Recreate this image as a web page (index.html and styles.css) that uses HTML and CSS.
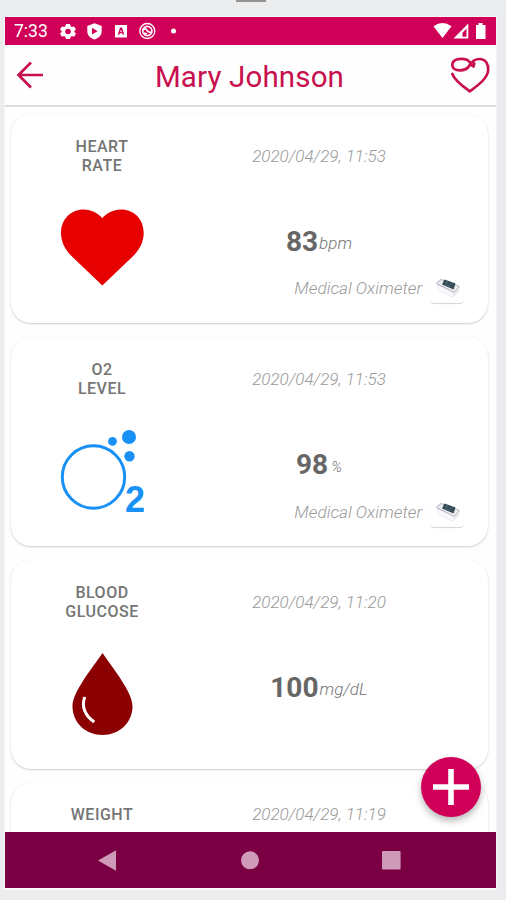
FILE: index.html
```html
<!DOCTYPE html>
<html lang="en">
<head>
<meta charset="utf-8">
<title>Mary Johnson</title>
<link rel="stylesheet" href="styles.css">
</head>
<body>
<div class="handle"></div>
<div class="phone">
  <div class="status">
    <span class="time">7:33</span>
    <svg class="status-icons" width="120" height="28" viewBox="55 17 120 28">
      <g fill="#fff">
        <path fill-rule="evenodd" d="M66 24h4l.6 2.3 1.3.8 2.2-.7 1.9 3.2-1.7 1.5v.9l1.7 1.6-1.9 3.2-2.2-.7-1.3.8L70 39h-4l-.6-2.1-1.3-.8-2.2.7-1.9-3.2 1.7-1.6v-.9L60 29.600l1.900-3.200 2.200.7 1.300-.8zM68 28.700a2.800 2.800 0 1 0 0 5.600a2.800 2.800 0 1 0 0-5.600z"/>
        <path fill-rule="evenodd" d="M94.500 23.300l7.200 2.700v5.200c0 4.200-3.300 7.100-7.200 8.300-3.900-1.200-7.200-4.100-7.200-8.300V26zM92 27.800v6.800l5.600-3.400z"/>
        <path fill-rule="evenodd" d="M115 25h12v12.500h-12zM117.800 34.800h1.500l.5-1.600h2.400l.5 1.600h1.500L122 27.500h-2zM120.200 32l.8-2.600.8 2.600z"/>
        <circle cx="173.500" cy="31" r="2.500"/>
      </g>
      <g fill="none" stroke="#fff">
        <circle cx="147.300" cy="31" r="7.500" stroke-width="1.300"/>
        <circle cx="147.300" cy="31" r="4.600" stroke-width="1.700"/>
        <path stroke-width="1.800" d="M142.500 30l3-1.500 2.500 3 4 1.500M144 33l3 1"/>
      </g>
    </svg>
    <svg class="signal-icons" width="56" height="28" viewBox="430 17 56 28" fill="#fff">
      <path d="M433.500 26.300q9-6.500 18 0L442.500 38z"/>
      <path fill-rule="evenodd" d="M468.300 23.500V38.500H453.500zM466.500 28.500l-4 4.200v4h4z"/>
      <path d="M476 25h2.500v-2h4v2h3v14H476z"/>
    </svg>
  </div>
  <header class="topbar">
    <svg class="back" width="30" height="30" viewBox="15 60 30 30" fill="none" stroke="#c8104f" stroke-width="2.700"><path d="M31 62.500L18.500 75 31 87.500M18.500 75h24.500"/></svg>
    <h1>Mary Johnson</h1>
    <svg class="brand" width="42" height="40" viewBox="449 55 42 40" fill="none" stroke="#c8104f" stroke-width="2.700" stroke-linecap="round" stroke-linejoin="round"><path d="M467.500 61C461 58.500 452.300 60 452.300 66c0 7 13.500 7 17.200.5 2.500-4.500 5.500-6.500 10-6.500 6.500 0 9 5.500 8.700 11C487.500 80 477 87 469.700 92.300 463 87.500 455 82 452.300 75M467.500 61c2 1.500 3.500 4 6 6.500M470.500 65.500l3 2 .8-3"/></svg>
  </header>
  <main class="list">
    <section class="card">
      <div class="kind">
        <h2>HEART<br>RATE</h2>
        <svg class="pic" width="96" height="90" viewBox="54 202 96 90"><path fill="#e60000" d="M102.300 285.500L72 256.500C65 249.500 61 242 61 233 61 219 71 209.500 83.500 209.500c8 0 14.500 3.500 18.800 8.700 4.300-5.200 10.800-8.700 18.800-8.700C134 209.500 143.700 219 143.700 233c0 9-4 16.500-11 23.500z"/></svg>
      </div>
      <div class="reading">
        <time>2020/04/29, 11:53</time>
        <p class="value"><b>83</b><i>bpm</i></p>
        <div class="device"><span>Medical Oximeter</span>
          <span class="thumb"><svg width="26" height="24" viewBox="0 0 26 24"><path fill="#ececf1" d="M1 6.500L5.500 3 24.500 10.500V15L18 22 3 14z"/><path fill="#f9f9fc" d="M2.500 9L18 16.500V21L3.500 13.500z"/><path fill="none" stroke="#b4b6c0" d="M1.500 7.500L6 3.500l18.500 7-5.500 6z"/><path fill="#344b53" d="M9.500 3.500L20.500 7.500 18.500 13.500 7 8.500z"/><path stroke="#4f7476" d="M10 6l3 1M14.500 8l3 1.200M10 8.500l5 2"/></svg></span>
        </div>
      </div>
    </section>
    <section class="card">
      <div class="kind">
        <h2>O2<br>LEVEL</h2>
        <svg class="pic" width="96" height="90" viewBox="54 425 96 90"><circle cx="93.500" cy="477" r="31.200" fill="none" stroke="#1890f5" stroke-width="3"/><g fill="#1890f5"><circle cx="112.500" cy="441.300" r="4.400"/><circle cx="129" cy="437" r="7"/><circle cx="129.500" cy="456.300" r="5.200"/><text class="two" x="125" y="511.500">2</text></g></svg>
      </div>
      <div class="reading">
        <time>2020/04/29, 11:53</time>
        <p class="value"><b>98</b><i class="percent">%</i></p>
        <div class="device"><span>Medical Oximeter</span>
          <span class="thumb"><svg width="26" height="24" viewBox="0 0 26 24"><path fill="#ececf1" d="M1 6.500L5.500 3 24.500 10.500V15L18 22 3 14z"/><path fill="#f9f9fc" d="M2.500 9L18 16.500V21L3.500 13.500z"/><path fill="none" stroke="#b4b6c0" d="M1.500 7.500L6 3.500l18.500 7-5.500 6z"/><path fill="#344b53" d="M9.500 3.500L20.500 7.500 18.500 13.500 7 8.500z"/><path stroke="#4f7476" d="M10 6l3 1M14.500 8l3 1.200M10 8.500l5 2"/></svg></span>
        </div>
      </div>
    </section>
    <section class="card">
      <div class="kind">
        <h2>BLOOD<br>GLUCOSE</h2>
        <svg class="pic" width="96" height="90" viewBox="54 648 96 90"><path fill="#8b0000" d="M102.500 653C93 667 72.500 692 72.500 706c0 17 13.500 29 30 29s30-12 30-29c0-14-20.500-39-30-53z"/><path fill="none" stroke="#fff" stroke-width="3" d="M84.800 697c-4 10 1 19.500 9.500 25"/></svg>
      </div>
      <div class="reading">
        <time>2020/04/29, 11:20</time>
        <p class="value"><b>100</b><i>mg/dL</i></p>
      </div>
    </section>
    <section class="card single">
      <div class="kind"><h2>WEIGHT</h2></div>
      <div class="reading"><time>2020/04/29, 11:19</time></div>
    </section>
  </main>
  <nav class="navbar">
    <svg width="491" height="56" viewBox="5 832 491 56" fill="#cf99b8"><path d="M98 860.500l18-10.300v20.600z"/><circle cx="250" cy="860.300" r="9"/><rect x="382" y="851" width="18.600" height="18.500" rx="1"/></svg>
  </nav>
  <button class="fab" aria-label="Add"><svg width="60" height="60" viewBox="0 0 60 60" stroke="#fff" stroke-width="5.600"><path d="M30 12v36M12 30h36"/></svg></button>
</div>
</body>
</html>
```

FILE: styles.css
```css
* { box-sizing: border-box; }
body {
  margin: 0;
  height: 900px;
  overflow: hidden;
  background: #ebecee;
  font-family: Roboto, "Liberation Sans", sans-serif;
  color: #757575;
}
h1, h2, p { margin: 0; }
svg { display: block; }
.handle { width: 30px; height: 2px; margin: 0 0 15px 236px; background: #929292; }
.phone {
  position: relative;
  width: 491px;
  height: 872px;
  margin-left: 5px;
  display: flex;
  flex-direction: column;
  background: #fefefe;
  box-shadow: 0 0 1px 1px #f5f5f7;
}
.status { height: 28px; display: flex; background: #d00058; color: #fff; }
.time { width: 50px; padding-left: 9px; font-size: 17.5px; line-height: 29px; }
.status-icons { flex: none; overflow: visible; }
.signal-icons { margin-left: auto; margin-right: 10px; }
.topbar {
  height: 62px;
  padding: 0 5px 0 10px;
  display: flex;
  align-items: center;
  justify-content: space-between;
  border-bottom: 2px solid #dcdcdc;
}
.topbar h1 { margin-left: 5px; font-size: 29.5px; font-weight: 400; letter-spacing: .15px; line-height: 60px; color: #c8104f; padding-top: 3px; }
.brand { margin-top: -2px; }
.list {
  height: 725px;
  padding: 7px 8px 0 6px;
  overflow: hidden;
  display: flex;
  flex-direction: column;
  gap: 14px;
}
.card {
  flex: none;
  height: 209px;
  display: grid;
  grid-template-columns: 182px 1fr;
  border-radius: 20px;
  background: #fff;
  box-shadow: 0 1px 2px rgba(0,0,0,.19), 0 0 1px rgba(0,0,0,.06);
}
.kind { padding-top: 23px; display: flex; flex-direction: column; align-items: center; }
.kind h2 { font-size: 16px; font-weight: 500; line-height: 19px; letter-spacing: .5px; text-align: center; }
.pic { margin-top: 27px; overflow: visible; }
.two { font: bold 36px/1 "Liberation Sans", sans-serif; }
.reading { display: flex; flex-direction: column; }
.reading time { margin-right: 43px; padding-top: 32px; text-align: center; font-size: 17px; line-height: 20px; font-style: italic; font-weight: 300; color: #999; }
.single time { padding-top: 21px; }
.single .kind { padding-top: 22px; }
.value { margin: 58px 43px 0 0; display: flex; justify-content: center; align-items: baseline; line-height: 36px; }
.value b { font-size: 28px; font-weight: 700; color: #666; }
.value i { position: relative; top: -2px; margin-left: 1px; font-size: 17px; font-weight: 300; }
.value .percent { margin-left: 3px; font-size: 15px; }
.device { margin: 11px 25px 0 0; display: flex; justify-content: flex-end; align-items: flex-start; gap: 9px; font-size: 17.2px; line-height: 28px; font-style: italic; font-weight: 300; color: #999; }
.thumb { width: 32px; height: 29px; padding: 2px 0 0 4px; border-radius: 3px; background: #fff; box-shadow: 0 1px 1px rgba(0,0,0,.18); }
.navbar { height: 56px; background: #7b0043; }
.fab {
  position: absolute;
  left: 416px;
  top: 740px;
  width: 60px;
  height: 60px;
  padding: 0;
  border: 0;
  border-radius: 50%;
  background: #d00058;
  box-shadow: 0 4px 7px rgba(0,0,0,.28);
}
```
